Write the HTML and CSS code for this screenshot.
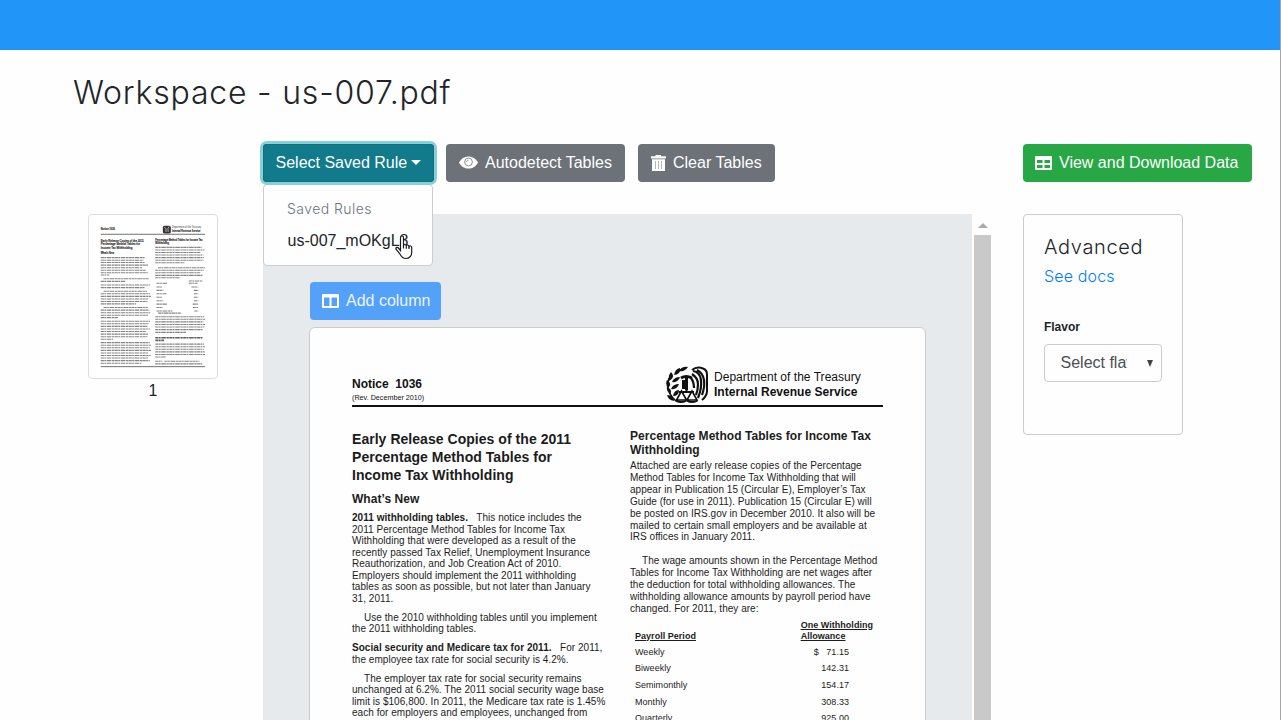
FILE: index.html
```html
<!DOCTYPE html>
<html lang="en">
<head>
<meta charset="utf-8">
<title>Workspace - us-007.pdf</title>
<link rel="stylesheet" href="styles.css">
</head>
<body>
<div class="app">
  <nav class="navbar"></nav>
  <h1 class="title">Workspace - us-007.pdf</h1>

  <div class="workspace">
    <div class="toolbar">
      <div class="dropdown">
        <button class="btn btn-rule">Select Saved Rule<span class="caret"></span></button>
        <div class="menu">
          <div class="menu-header">Saved Rules</div>
          <div class="menu-item">us-007_mOKgL8</div>
        </div>
        <svg class="cursor" width="18" height="25" viewBox="0 0 18 25"><path d="M5.500 2.500c0-2 3-2 3 0v8c.2-1.500 2.600-1.300 2.800.3.400-1.300 2.500-1 2.700.7.600-1 2.700-.6 2.700 1v5c0 3.300-2.500 6-5.700 6-3.500 0-4.800-2-6-4.500L1.200 14.500c-1-1.800 1-2.700 2.200-1.500l2.100 2.500z" fill="#fff" stroke="#1b1b22" stroke-width="1.200"/><path d="M8.500 10v3.500M11.300 10.800v3M14 11.500v2.500" stroke="#1b1b22" stroke-width="1.200"/></svg>
      </div>
      <button class="btn btn-gray"><svg class="icon-eye" width="19" height="13" viewBox="0 0 19 13"><path d="M0 6.500C2 2.600 5.400.4 9.500.4S17 2.600 19 6.500c-2 3.900-5.400 6.100-9.500 6.100S2 10.400 0 6.500z" fill="#fff"/><circle cx="9.500" cy="6" r="3.900" fill="none" stroke="#8c9297" stroke-width="1"/><path d="M7.600 6.200c0-1.300.7-2.100 1.900-2.100" fill="none" stroke="#8c9297" stroke-width="1"/></svg>Autodetect Tables</button>
      <button class="btn btn-gray"><svg class="icon-trash" width="15" height="16" viewBox="0 0 15 16"><path d="M0 1.200h4.500V0h5.500v1.200h5V3.500H0zM1 4.200h13V16H1z" fill="#fff"/><path d="M4.500 6v8M7.500 6v8M10.500 6v8" stroke="#b3b8bc" stroke-width="1"/></svg>Clear Tables</button>
    </div>
    <button class="btn btn-green"><svg class="icon-table" width="17" height="14" viewBox="0 0 17 14"><path fill="#fff" fill-rule="evenodd" d="M1 0h15q1 0 1 1v12q0 1-1 1H1q-1 0-1-1V1q0-1 1-1zM2 4h5.500v3H2zM9.500 4H15v3H9.500zM2 9h5.500v3H2zM9.500 9H15v3H9.500z"/></svg>View and Download Data</button>

    <aside class="thumbs">
      <svg class="thumb" viewBox="-17 -8 643 761" preserveAspectRatio="none">
        <g class="thumb-bold">
          <text x="42" y="61" font-size="13">Notice 1036</text>
          <text x="42" y="116" font-size="14">Early Release Copies of the 2011</text>
          <text x="42" y="134" font-size="14">Percentage Method Tables for</text>
          <text x="42" y="152" font-size="14">Income Tax Withholding</text>
          <text x="42" y="175" font-size="12">What’s New</text>
          <text x="316" y="113" font-size="12">Percentage Method Tables for Income Tax</text>
          <text x="316" y="127" font-size="12">Withholding</text>
          <text x="400" y="70" font-size="12">Internal Revenue Service</text>
        </g>
        <text x="400" y="54" font-size="12">Department of the Treasury</text>
        <path d="M42 82H566M42 700H566" stroke="#555" stroke-width="4"/>
        <rect x="354" y="42" width="40" height="36" rx="8" fill="#333"/>
        <path d="M362 48q12 6 8 24M385 46q-9 8-4 25" stroke="#ccc" stroke-width="4" fill="none"/>
        <g class="thumb-lines">
          <path d="M42 191H262M42 203H256M42 214H262M42 226H282M42 238H250M42 250H270M42 262H278M42 272H84"/>
          <path d="M56 290H284M42 302H166"/>
          <path d="M42 319H290M42 331H262"/>
          <path d="M56 348H274M42 360H290M42 372H294M42 384H282M42 396H276M42 407H220"/>
          <path d="M56 424H278M42 436H286M42 448H290M42 460H280M42 471H128"/>
          <path d="M42 488H290M42 500H284M42 512H276M42 524H288M42 536H270M42 548H282M42 560H276M42 572H104"/>
          <path d="M42 588H288M42 600H294M42 612H288M42 624H294M42 636H282M42 648H292M42 660H280M42 672H288M42 684H246"/>
          <path d="M316 143H548M316 155H564M316 167H544M316 179H558M316 191H560M316 203H558M316 215H462"/>
          <path d="M330 238H566M316 250H560M316 262H544M316 274H554M316 285H438"/>
          <path d="M484 300H552M484 311H528M322 311H378M322 328H352M498 328H532M322 344H356M510 344H532M322 360H372M510 360H532M322 376H350M510 376H532M322 392H356M510 392H532M322 408H374M504 408H532M322 424H354M504 424H532M322 440H402M512 440H532M330 450H444"/>
          <path d="M316 467H562M316 479H566M316 491H558M316 503H566M316 515H562M316 527H554M316 540H470"/>
          <path d="M316 565H556M316 577H360" class="heavy"/>
          <path d="M316 595H560M316 607H566M316 619H560M316 631H564M316 643H566M316 655H368M316 675H352M362 675H538M316 687H552"/>
        </g>
      </svg>
      <span class="thumb-label">1</span>
    </aside>

    <main class="viewer">
      <div class="canvas">
        <button class="btn btn-column"><svg class="icon-column" width="17" height="14" viewBox="0 0 17 14"><path fill="#fff" fill-rule="evenodd" d="M1 0h15q1 0 1 1v12q0 1-1 1H1q-1 0-1-1V1q0-1 1-1zM2 3.500h5.500V12H2zM9.500 3.500H15V12H9.500z"/></svg>Add column</button>
        <article class="page">
          <header class="page-head">
            <div>
              <div class="notice">Notice&nbsp; 1036</div>
              <div class="rev">(Rev. December 2010)</div>
            </div>
            <div class="agency">
              <svg width="42" height="38" viewBox="0 0 42 38" fill="none" stroke="#111">
                <path d="M3 13C0 22 3 30 10 36" stroke-width="1.500"/>
                <path d="M13 6q3-5 9-4-3 5-9 4zM8 10q1-6 6-7 1 6-6 7zM3 16q-1-6 2-9 5 5-2 9zM6 17q2-5 8-5-2 6-8 5zM2 23q-3-4-1-8 6 4 1 8zM5 24q2-5 8-5-2 6-8 5zM4 29q-4-3-3-7 6 3 3 7zM7 31q1-6 6-6 0 6-6 6zM8 36q-6-1-7-6 7 0 7 6z" fill="#111" stroke="none"/>
                <path d="M15 13q5-3 11 0M20.500 12v13M17.500 15v9" stroke-width="3"/>
                <path d="M13 27h15M20.500 24v4" stroke-width="2"/>
                <path d="M15.500 26l-5 9h10zM26 26l-5 9h10z" stroke-width="1.600"/>
                <path d="M10 35.500q5.500 3 10.500 0M21 35.500q5.500 3 10.500 0" stroke-width="2"/>
                <path d="M26 5q5-4 11-1.500 4 1.500 4 6V26q0 5-5 9" stroke-width="2"/>
                <path d="M27 6q7 1 8 9t-3 18M31 5q6 3 7 10t-2 15M26 9q6 4 6 10t-2 11M25 13q3 4 3 10" stroke-width="2.200"/>
              </svg>
              <div class="agency-name">Department of the Treasury<br><b>Internal Revenue Service</b></div>
            </div>
          </header>
          <div class="columns">
            <section class="col-left">
              <h2>Early Release Copies of the 2011<br>Percentage Method Tables for<br>Income Tax Withholding</h2>
              <h3>What’s New</h3>
              <p><b>2011 withholding tables.</b>&nbsp;&nbsp; This notice includes the<br>2011 Percentage Method Tables for Income Tax<br>Withholding that were developed as a result of the<br>recently passed Tax Relief, Unemployment Insurance<br>Reauthorization, and Job Creation Act of 2010.<br>Employers should implement the 2011 withholding<br>tables as soon as possible, but not later than January<br>31, 2011.</p>
              <p class="indent">Use the 2010 withholding tables until you implement<br>the 2011 withholding tables.</p>
              <p><b>Social security and Medicare tax for 2011.</b>&nbsp;&nbsp; For 2011,<br>the employee tax rate for social security is 4.2%.</p>
              <p class="indent">The employer tax rate for social security remains<br>unchanged at 6.2%. The 2011 social security wage base<br>limit is $106,800. In 2011, the Medicare tax rate is 1.45%<br>each for employers and employees, unchanged from<br>2010. There is no wage base limit for Medicare tax.</p>
            </section>
            <section class="col-right">
              <h4>Percentage Method Tables for Income Tax<br>Withholding</h4>
              <p>Attached are early release copies of the Percentage<br>Method Tables for Income Tax Withholding that will<br>appear in Publication 15 (Circular E), Employer’s Tax<br>Guide (for use in 2011). Publication 15 (Circular E) will<br>be posted on IRS.gov in December 2010. It also will be<br>mailed to certain small employers and be available at<br>IRS offices in January 2011.</p>
              <p class="indent">The wage amounts shown in the Percentage Method<br>Tables for Income Tax Withholding are net wages after<br>the deduction for total withholding allowances. The<br>withholding allowance amounts by payroll period have<br>changed. For 2011, they are:</p>
              <div class="allowances">
                <div class="row row-head"><u>Payroll Period</u><u>One Withholding<br>Allowance</u></div>
                <div class="row"><span>Weekly</span><span class="amount">$&nbsp;&nbsp; 71.15</span></div>
                <div class="row"><span>Biweekly</span><span class="amount">142.31</span></div>
                <div class="row"><span>Semimonthly</span><span class="amount">154.17</span></div>
                <div class="row"><span>Monthly</span><span class="amount">308.33</span></div>
                <div class="row"><span>Quarterly</span><span class="amount">925.00</span></div>
              </div>
            </section>
          </div>
        </article>
      </div>
      <div class="scrollbar"><span class="scroll-up"></span><span class="scroll-thumb"></span></div>
    </main>

    <aside class="advanced">
      <h2 class="adv-title">Advanced</h2>
      <a class="adv-link">See docs</a>
      <label class="adv-label">Flavor</label>
      <div class="select"><span class="select-text">Select flavor</span><span class="select-arrow"></span></div>
    </aside>
  </div>
</div>
</body>
</html>
```
FILE: styles.css
```css
* { box-sizing: border-box; }
body { margin: 0; background: #fefefe; color: #212529; font-family: "Liberation Sans", Arial, sans-serif; font-size: 16px; overflow: hidden; }
.app { height: 720px; overflow: hidden; border-right: 1px solid #a6a6a6; }
.navbar { height: 50px; background: #2196f8; }
.title { margin: 22px 0 30px 73px; height: 42px; font: 300 32px/42px Inter, sans-serif; letter-spacing: 0.8px; white-space: nowrap; }
h2, h3, h4, p { margin: 0; }

.workspace { display: grid; grid-template-columns: 130px 773px 261px; grid-template-rows: 38px 506px; row-gap: 32px; padding-left: 88px; }
.toolbar { grid-column: 2; display: flex; gap: 13px; }
.toolbar, .viewer { margin-left: 45px; }
.btn-green, .advanced { margin-left: 32px; }
.btn { height: 38px; padding: 0 12px 1px; border: 0; border-radius: 4px; color: #fff; font: 16px/25px "Liberation Sans", Arial, sans-serif; display: flex; align-items: center; white-space: nowrap; }
.btn svg { flex: none; }
.dropdown { position: relative; width: 170px; z-index: 2; }
.btn-rule { width: 171px; padding-left: 12.500px; background: #117a8b; box-shadow: inset 0 0 0 1px #10707f, 0 0 0 3px #89cfda; }
.caret { margin: 0 0 1px 4px; border: 5px solid transparent; border-top-color: #fff; border-bottom: 0; }
.btn-gray { background: #6c7277; }
.dropdown + .btn-gray { width: 179px; padding-left: 13px; }
.icon-eye { margin-right: 7px; }
.dropdown ~ .btn-gray:last-child { width: 137px; padding-left: 13px; }
.icon-trash { margin-right: 7px; }
.btn-green { background: #28a745; width: 229px; }
.icon-table, .icon-column { margin-right: 7px; }

.menu { position: absolute; top: 40px; left: 0; width: 170px; height: 82px; padding: 12px 23px; background: #fefefe; border: 1px solid #ccc; border-radius: 4px; z-index: -1; }
.menu-header { font: 300 14px/24px Inter, sans-serif; letter-spacing: .45px; color: #6c757d; }
.menu-item { margin: 8px 0 0 .5px; font-size: 16px; line-height: 23px; white-space: nowrap; }
.cursor { position: absolute; left: 132px; top: 91px; }

.thumbs { display: flex; flex-direction: column; align-items: center; }
.thumb { width: 130px; height: 165px; border: 1px solid #ddd; border-radius: 4px; background: #fff; font-family: "Liberation Sans", Arial, sans-serif; fill: #333; }
.thumb-bold { font-weight: bold; stroke: #222; stroke-width: .5; }
.thumb-lines { fill: none; stroke: #555; stroke-width: 5; stroke-dasharray: 16 2 9 3 23 3 12 2; opacity: .72; }
.heavy { stroke: #222; stroke-width: 8; }
.thumb-label { line-height: 24px; }

.viewer { display: flex; gap: 2px; }
.canvas { width: 709px; height: 506px; padding: 68px 46px 0 47px; background: #e6eaed; overflow: hidden; }
.btn-column { width: 131px; background: #53a1f8; color: #eaf4ff; }
.page { width: 617px; height: 780px; margin: 7px 0 0 -1px; padding: 36px 42px; background: #fefefe; border: 1px solid #ccc; border-radius: 6px; color: #1c1c1c; white-space: nowrap; }
.page-head { display: flex; justify-content: space-between; height: 43px; width: 531px; border-bottom: 2px solid #111; color: #111; }
.notice { padding-top: 12px; font-weight: bold; font-size: 12px; line-height: 16px; }
.rev { font-size: 7.200px; line-height: 11px; }
.agency { display: flex; gap: 6px; width: 217px; padding-top: 1px; }
.agency-name { padding-top: 5px; font-size: 12px; line-height: 15px; letter-spacing: .03px; }
.columns { display: flex; }
.col-left { width: 278px; padding-top: 23px; font-size: 10px; line-height: 11.500px; letter-spacing: .04px; }
.col-left h2 { font-size: 14px; line-height: 18px; }
.col-left h3 { margin: 7px 0 5px; font-size: 12px; line-height: 16px; }
.col-left p { margin-bottom: 7.500px; }
.indent { text-indent: 12px; }
.col-right { padding-top: 21.500px; font-size: 10px; line-height: 11.900px; letter-spacing: .03px; }
.col-right h4 { font-size: 12px; line-height: 14.500px; margin-bottom: 2.500px; letter-spacing: .05px; }
.col-right p { margin-bottom: 12px; }
.col-right p + p { margin-bottom: 5px; }
.allowances { width: 238px; padding-left: 5px; font-size: 9px; line-height: 16.600px; }
.row { display: flex; justify-content: space-between; }
.row-head { align-items: flex-end; line-height: 11px; font-weight: bold; margin-bottom: 2px; width: 238px; }
.amount { margin-right: 19px; }

.scrollbar { width: 17px; display: flex; flex-direction: column; align-items: center; }
.scroll-up { margin: 9px 0 7px; border: 5px solid transparent; border-top: 0; border-bottom-color: #aaa; }
.scroll-thumb { width: 17px; flex: 1; background: #c9c9c9; }

.advanced { width: 160px; height: 221px; padding: 20px; border: 1px solid #ccc; border-radius: 4px; display: flex; flex-direction: column; }
.adv-title { font: 300 20px/24px Inter, sans-serif; letter-spacing: .65px; }
.adv-link { margin-top: 5px; font: 300 16px/24px Inter, sans-serif; letter-spacing: .15px; color: #007bff; }
.adv-label { margin-top: 30px; font-weight: bold; font-size: 12px; line-height: 18px; letter-spacing: -.02px; }
.select { width: 118px; height: 38px; margin-top: 8px; padding: 0 8px 1px 15.500px; border: 1px solid #ccc; border-radius: 4px; color: #495057; display: flex; align-items: center; justify-content: space-between; }
.select-text { width: 66px; overflow: hidden; white-space: nowrap; line-height: 25px; }
.select-arrow { margin-top: 1px; border: 3.500px solid transparent; border-top: 7px solid #444; border-bottom: 0; }
```
